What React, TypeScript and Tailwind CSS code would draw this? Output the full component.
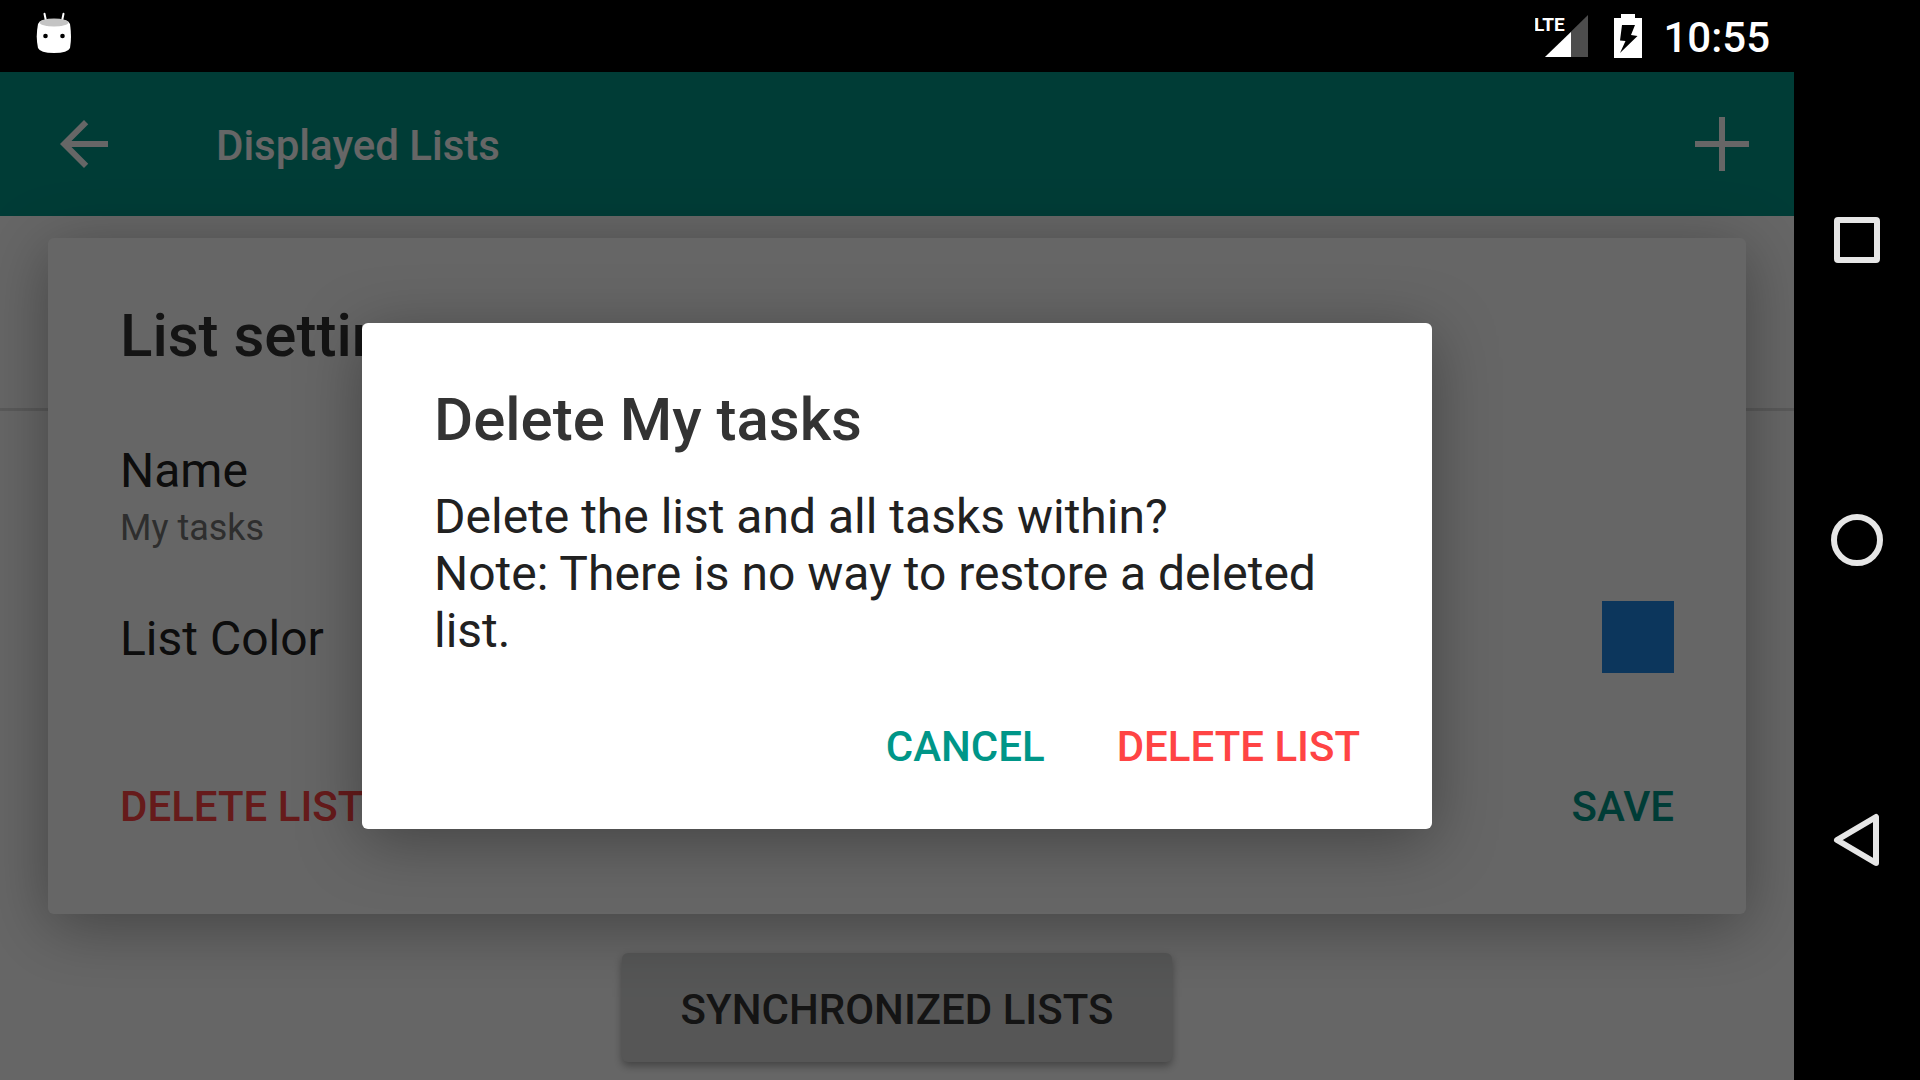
import type { ReactNode } from "react";

function NavButton({ label, children }: { label: string; children: ReactNode }) {
  return (
    <button aria-label={label} className="flex size-[72px] items-center justify-center text-[#e6e6e6]">
      <svg viewBox="0 0 72 72" className="size-[72px]" fill="none" stroke="currentColor" strokeWidth="6" strokeLinejoin="round">
        {children}
      </svg>
    </button>
  );
}

function StatusBar() {
  return (
    <header className="flex h-[72px] shrink-0 items-center justify-between bg-black pr-6 pl-9 text-white">
      <svg viewBox="0 0 36 42" className="mb-[6px] h-[42px] w-9" aria-label="Marshmallow">
        <path d="M8.500 1.800 10 9M27.500 1.800 26 9" stroke="#fff" strokeWidth="2" strokeLinecap="round" />
        <path d="M2 12Q3.500 7 18 7t16 5q2 13 0 24-2 5-16 5T2 36q-2.500-11 0-24Z" fill="#fff" />
        <ellipse cx="18" cy="10.500" rx="14.500" ry="4" fill="#c4c4c4" />
        <circle cx="9.500" cy="24" r="2.300" fill="#000" />
        <circle cx="26.500" cy="24" r="2.300" fill="#000" />
      </svg>
      <div className="flex items-center">
        <svg viewBox="0 0 54 44" className="h-11 w-[54px]" aria-label="LTE signal">
          <path d="M53 1v42H10Z" fill="#4d4d4d" />
          <path d="M36 18v25H10Z" fill="#fff" />
          <text x="-1" y="17" fill="#fff" className="font-['Liberation_Sans_Narrow','Roboto',sans-serif] text-[19px] font-bold">LTE</text>
        </svg>
        <svg viewBox="0 0 30 44" className="ml-6 h-11 w-[30px]" aria-label="Battery charging">
          <path d="M8 0h14v4h7v40H1V4h7Z" fill="#fff" />
          <path d="M9 11h13l-4 10 6.500 1L7 39l5.500-12L7 26.500Z" fill="#000" />
        </svg>
        <span className="ml-5 pt-1 text-[42px] leading-[48px] font-medium">10:55</span>
      </div>
    </header>
  );
}

function Toolbar() {
  return (
    <div className="flex h-36 shrink-0 items-center bg-[#009688] pr-9 pl-12 text-white">
      <button aria-label="Back" className="size-[72px]">
        <svg viewBox="0 0 24 24" className="size-[72px]" fill="currentColor">
          <path d="M20 11H7.830l5.590-5.590L12 4l-8 8 8 8 1.410-1.410L7.830 13H20v-2Z" />
        </svg>
      </button>
      <h1 className="ml-24 flex-1 pt-1 text-[42px] leading-[48px] font-medium">Displayed Lists</h1>
      <button aria-label="Add list" className="size-[72px]">
        <svg viewBox="0 0 72 72" className="size-[72px]" fill="none" stroke="currentColor" strokeWidth="6">
          <path d="M36 9v54M9 36h54" />
        </svg>
      </button>
    </div>
  );
}

function ListSettingsDialog() {
  return (
    <section
      aria-labelledby="settings-title"
      className="mx-12 w-full rounded-md bg-white px-[72px] pt-[62px] pb-[83px] text-[#212121] shadow-[0_12px_64px_rgba(0,0,0,0.34)]"
    >
      <h2 id="settings-title" className="text-[60px] leading-[72px] font-medium text-[#333333]">List settings</h2>
      <button className="mt-[70px] block w-full text-left">
        <span className="block text-5xl leading-[57px]">Name</span>
        <span className="mt-2 block text-4xl leading-[42px] text-[#737373]">My tasks</span>
      </button>
      <button className="mt-[52px] flex w-full items-center justify-between">
        <span className="pt-[2px] text-5xl leading-[57px]">List Color</span>
        <span className="size-[72px] bg-[#1e88e5]" />
      </button>
      <div className="mt-[110px] flex justify-between text-[42px] leading-[48px] font-medium">
        <button className="text-[#ff4444]">DELETE LIST</button>
        <button className="text-[#009688]">SAVE</button>
      </div>
    </section>
  );
}

function DeleteDialog() {
  return (
    <section
      role="alertdialog"
      aria-labelledby="delete-title"
      aria-describedby="delete-text"
      className="w-full max-w-[1070px] rounded-md bg-white px-[72px] pt-[61px] pb-[58px] shadow-[0_12px_64px_rgba(0,0,0,0.34)]"
    >
      <h2 id="delete-title" className="text-[60px] leading-[72px] font-medium text-[#333333]">Delete My tasks</h2>
      <p id="delete-text" className="mt-8 text-5xl leading-[57px] text-[#212121]">
        Delete the list and all tasks within?
        <br />
        Note: There is no way to restore a deleted list.
      </p>
      <div className="mt-16 flex justify-end gap-[72px] text-[42px] leading-[48px] font-medium">
        <button className="text-[#009688]">CANCEL</button>
        <button className="text-[#ff4444]">DELETE LIST</button>
      </div>
    </section>
  );
}

export default function App() {
  return (
    <div className="flex h-screen overflow-hidden bg-black font-['Roboto',sans-serif]">
      <div className="relative flex min-w-0 flex-1 flex-col">
        <StatusBar />
        <Toolbar />
        <main className="flex flex-1 flex-col items-center bg-white pb-[18px]">
          <div className="h-[195px] w-full shrink-0 border-b-[3px] border-[#e0e0e0]" />
          <button className="mt-auto rounded-md bg-[#d6d7d7] px-[59px] pt-8 pb-7 text-[42px] leading-[49px] font-medium text-[#333333] shadow-[0_4px_8px_rgba(0,0,0,0.35)]">
            SYNCHRONIZED LISTS
          </button>
        </main>
        <div className="absolute inset-x-0 top-[72px] bottom-0 flex items-center overflow-hidden">
          <ListSettingsDialog />
        </div>
        <div className="absolute inset-x-0 top-[72px] bottom-0 flex items-center justify-center overflow-hidden bg-black/60">
          <DeleteDialog />
        </div>
      </div>
      <nav className="flex w-[126px] shrink-0 flex-col items-center justify-center gap-[228px] bg-black">
        <NavButton label="Overview">
          <rect x="16" y="16" width="40" height="40" rx="1" />
        </NavButton>
        <NavButton label="Home">
          <circle cx="36" cy="36" r="23" />
        </NavButton>
        <NavButton label="Back">
          <path d="M55 13v46L16 36Z" />
        </NavButton>
      </nav>
    </div>
  );
}
